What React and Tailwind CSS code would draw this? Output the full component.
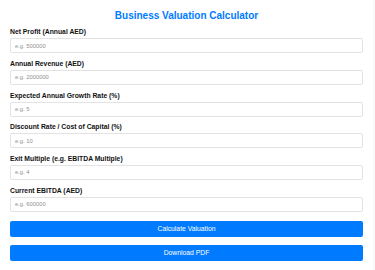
const fields = [
  { label: 'Net Profit (Annual AED)', placeholder: 'e.g. 500000' },
  { label: 'Annual Revenue (AED)', placeholder: 'e.g. 2000000' },
  { label: 'Expected Annual Growth Rate (%)', placeholder: 'e.g. 5' },
  { label: 'Discount Rate / Cost of Capital (%)', placeholder: 'e.g. 10' },
  { label: 'Exit Multiple (e.g. EBITDA Multiple)', placeholder: 'e.g. 4' },
  { label: 'Current EBITDA (AED)', placeholder: 'e.g. 600000' },
]

export default function App() {
  return (
    <div className="min-h-screen bg-white font-['Liberation_Sans',Arial,sans-serif] overflow-hidden">
      {/* Card */}
      <div className="w-[373px] -mt-[8px] bg-white rounded-[5px] shadow-[0_0_3px_rgba(0,0,0,0.1)] px-[10px] pt-[17.7px] pb-[12px]">
        <h1 className="text-[10px] leading-[12px] font-bold text-[#007bff] text-center">
          Business Valuation Calculator
        </h1>

        {fields.map(({ label, placeholder }, i) => (
          <div key={label} className={i === 0 ? 'mt-[6.5px]' : 'mt-[6.7px]'}>
            <label className="block text-[6.8px] leading-[8px] font-bold text-[#111]">{label}</label>
            <input
              type="number"
              placeholder={placeholder}
              className="block w-full h-[15px] mt-[2px] px-[4px] text-[5.8px] bg-white border border-[#e3e3e3] rounded-[2px] outline-none placeholder:text-[#8f8f8f]"
            />
          </div>
        ))}

        <button className="block w-full h-[16px] mt-[9px] bg-[#007bff] text-white text-[6.8px] rounded-[2px]">
          Calculate Valuation
        </button>
        <button className="block w-full h-[16px] mt-[8px] bg-[#007bff] text-white text-[6.8px] rounded-[2px]">
          Download PDF
        </button>
      </div>
    </div>
  )
}
